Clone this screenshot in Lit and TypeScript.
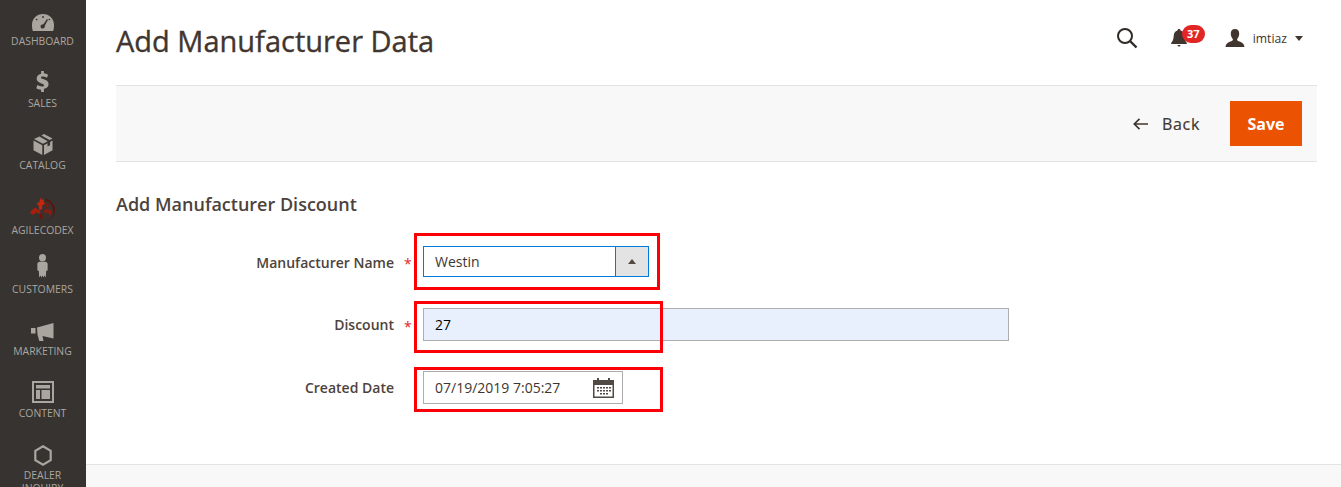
import { LitElement, html, css } from "lit";
import { customElement } from "lit/decorators.js";

const navItems = [
  { label: "DASHBOARD", lift: 1, icon: html`<svg width="22" height="17" viewBox="0 0 22 17"><path fill="#aaa69f" fill-rule="evenodd" d="M11 0C4.800 0 .3 4.600 0 10.500c-.1 2.500.3 4.700.8 6.500h20.400c.5-1.800.9-4 .8-6.500C21.700 4.600 17.200 0 11 0zM4.500 4.500l1.200 1.200-.9.900-1.200-1.200zM10.300 2h1.400v2h-1.400zM17.500 4.500l.9.900-1.200 1.200-.9-.9zM15 5l1 .7-3.200 6c.3 1.100-.2 2.400-1.400 2.800-1.200.4-2.500-.3-2.800-1.500-.3-1.200.3-2.300 1.500-2.600l1.300-.2z"/></svg>`, h: 62 },
  { label: "SALES", lift: 2, h: 62, icon: html`<svg width="13" height="21" viewBox="0 0 14 23" preserveAspectRatio="none"><path fill="#aaa69f" d="M5.500 0h3v2.600c1.700.2 3.200.7 4.500 1.500l-1.200 3.300c-1.500-.9-3.100-1.400-4.500-1.400-1.300 0-2 .5-2 1.200 0 .8.900 1.200 3 1.900 3.300 1 5.200 2.400 5.200 5.300 0 2.600-1.800 4.500-5 5V23h-3v-2.500c-2-.2-3.900-.8-5.200-1.700l1.200-3.400c1.500 1 3.400 1.600 5 1.600 1.400 0 2.200-.5 2.200-1.400 0-.8-.8-1.300-2.900-2C2.700 12.600.7 11.200.7 8.300c0-2.700 1.800-4.700 4.800-5.400z"/></svg>` },
  { label: "CATALOG", lift: 1, h: 65, icon: html`<svg width="20" height="21" viewBox="0 0 20 21"><path fill="#aaa69f" d="M11 0l8.500 4.600-2.800 1.500L8.400 1.400zM6.400 2.500l8.300 4.700L10 9.700 1 5zM.5 6.600l8.800 4.600V21L.5 16.200zM19.500 6.600v9.600L11 21v-9.800l3.500-1.900v3.300l2.600-1.300V8z"/></svg>` },
  { label: "AGILECODEX", lift: -1, h: 59, icon: html`<svg width="25" height="25" viewBox="0 0 25 25"><path fill="#5a1510" d="M15 1.500A11.500 11.500 0 0 1 25 12.500 11.500 11.500 0 0 1 8 23.300 10 10 0 0 0 23 12.500 10 10 0 0 0 15 3.200z"/><path fill="#c4260f" d="M11 0l1 3 2-1-.5 3 2 1.500-3 1.500-.5 4-2.500 1.500-1-5L6.500 6 9 5.500z"/><path fill="#a81e0e" d="M0 15l5-4.500 4.500 3 1.500 3.500-4.500-1.500L2 18z"/><path fill="#8a1c10" d="M13.500 15l2-3.500 5.500 1.500.5 3.500-2 2.500-1.500-3.500-2 .5z"/><path fill="#6b1710" d="M10.500 16.500l2 .5 .5 4-2 1.500-2.500-3z"/><circle cx="17" cy="8.500" r="2" fill="#7a1a10"/></svg>` },
  { label: "CUSTOMERS", lift: 2, h: 62, icon: html`<svg width="11" height="24" viewBox="0 0 12 25" preserveAspectRatio="none"><path fill="#aaa69f" d="M6 0a3.800 3.800 0 1 1 0 7.600A3.800 3.800 0 0 1 6 0zM3 8h6c1.600 0 2.600 1 2.600 2.500v6.500l-1.600.8-.4 6.700-1.500-2-1 2-1.100-2-1.100 2-1-2-1.500 2-.4-6.700L.4 17v-6.500C.4 9 1.400 8 3 8z"/></svg>` },
  { label: "MARKETING", lift: 1, h: 62, icon: html`<svg width="23" height="18" viewBox="0 0 23 18"><path fill="#aaa69f" d="M22.500 0v15.500L11.500 13l1 5H8.300L6.500 11.500 6 4.500zM0 5h4.500v5.500H0z"/></svg>` },
  { label: "CONTENT", lift: 1, h: 62, icon: html`<svg width="22" height="22" viewBox="0 0 22 22"><path fill="#aaa69f" fill-rule="evenodd" d="M0 0h22v22H0zM2 2v18h18V2zM4 4h14v3.500H4zM4 9h4v9H4zM9.500 9H18v9H9.500z"/></svg>` },
  { label: "DEALER INQUIRY", lift: 0, h: 62, icon: html`<svg width="18" height="21" viewBox="0 0 18 21"><path fill="none" stroke="#aaa69f" stroke-width="2.200" d="M9 1.300l7.700 4.500v9.400L9 19.700l-7.700-4.500V5.800z"/></svg>` },
];

@customElement("app-root")
export class AppRoot extends LitElement {
  static styles = css`
    :host {
      display: block;
      height: 487px;
      overflow: hidden;
      font-family: "Open Sans", sans-serif;
      color: #41362f;
      position: relative;
      background: #fff;
    }
    .shell { display: flex; height: 487px; }
    .nav {
      width: 86px;
      flex: none;
      background: #373330;
      overflow: hidden;
      padding: 11px 1px 0 0;
      box-sizing: border-box;
    }
    .nav-item {
      display: flex;
      flex-direction: column;
      align-items: center;
      color: #aaa69f;
      font-size: 10.4px;
      line-height: 13px;
      text-align: center;
    }
    .nav-icon { height: 21px; display: flex; align-items: flex-end; justify-content: center; }
    .nav-label { margin-top: 3px; width: 70px; }
    .main { flex: 1; min-width: 0; display: flex; flex-direction: column; }
    .page { padding: 0 24px 0 30px; height: 464px; box-sizing: border-box; }
    .head { display: flex; align-items: flex-start; height: 85px; }
    h1 {
      margin: 21px 0 0;
      font-size: 29px;
      font-weight: 400;
      line-height: 40px;
      color: #41362f;
      -webkit-text-stroke: 0.35px #41362f;
    }
    .tools { margin-left: auto; display: flex; align-items: center; margin-top: 26px; height: 24px; }
    .search { margin-right: 33px; display: flex; }
    .bell { position: relative; width: 16px; height: 18px; margin-right: 38px; display: flex; }
    .badge {
      position: absolute;
      left: 11px;
      top: -4px;
      width: 23px;
      height: 18px;
      border-radius: 9px;
      background: #e22626;
      color: #fff;
      font-size: 11px;
      font-weight: 700;
      line-height: 18px;
      text-align: center;
    }
    .user { display: flex; align-items: center; font-size: 12.2px; color: #41362f; margin-right: 14px; }
    .user svg:first-child { margin-right: 8px; }
    .caret { margin-left: 8px; }
    .toolbar {
      height: 77px;
      box-sizing: border-box;
      background: #f8f8f8;
      border-top: 1px solid #e3e3e3;
      border-bottom: 1px solid #e3e3e3;
      display: flex;
      align-items: center;
      justify-content: flex-end;
      padding: 0 15px 0 0;
    }
    .back { display: flex; align-items: center; font-size: 16px; color: #41362f; margin-right: 30px; letter-spacing: 0.7px; -webkit-text-stroke: 0.2px #41362f; }
    .back svg { margin-right: 14px; }
    .save {
      width: 72px;
      height: 45px;
      background: #eb5202;
      color: #fff;
      font-size: 16px;
      font-weight: 700;
      display: flex;
      align-items: center;
      justify-content: center;
    }
    h2 {
      margin: 30px 0 0;
      font-size: 18px;
      font-weight: 600;
      line-height: 24px;
      color: #4d433c;
    }
    .form { margin-top: 30px; display: flex; flex-direction: column; }
    .row { display: grid; grid-template-columns: 278px 29px auto; align-items: center; }
    .row + .row { margin-top: 31px; }
    .row.d { margin-top: 30px; }
    .lab { text-align: right; font-size: 14px; font-weight: 600; color: #4d433c; line-height: 20px; }
    .lab.low { padding-top: 2px; }
    .star { color: #e22626; font-size: 14px; padding-left: 10px; line-height: 20px; padding-top: 4px; }
    .select {
      width: 226px;
      height: 31px;
      box-sizing: border-box;
      border: 1px solid #007bdb;
      display: flex;
      font-size: 14px;
      line-height: 29px;
      color: #41362f;
      background: #fff;
    }
    .select .val { flex: 1; padding-left: 11px; }
    .select .btn {
      width: 32px;
      background: #e3e3e3;
      border-left: 1px solid #007bdb;
      display: flex;
      align-items: center;
      justify-content: center;
    }
    .input {
      box-sizing: border-box;
      height: 33px;
      border: 1px solid #adadad;
      font-size: 14px;
      line-height: 31px;
      padding-left: 11px;
    }
    .input.num { width: 586px; background: #e8f0fe; color: #000; }
    .input.date { width: 200px; background: #fff; color: #41362f; display: flex; align-items: center; justify-content: space-between; padding-right: 8px; }
    .input.date svg { display: block; }
    .mark { position: absolute; border: 3px solid #fb0007; box-sizing: border-box; pointer-events: none; }
    .m1 { left: 414px; top: 233px; width: 246px; height: 57px; }
    .m2 { left: 414px; top: 301px; width: 249px; height: 52px; }
    .m3 { left: 414px; top: 367px; width: 249px; height: 45px; }
    .foot { flex: 1; border-top: 1px solid #e3e3e3; background: #f8f8f8; }
  `;

  render() {
    return html`
      <div class="shell">
        <nav class="nav">
          ${navItems.map(
            (n) => html`<div class="nav-item" style="height:${n.h}px">
              <div class="nav-icon" style="transform:translateY(${-n.lift}px)">${n.icon}</div>
              <div class="nav-label">${n.label}</div>
            </div>`
          )}
        </nav>
        <div class="main">
          <div class="page">
            <div class="head">
              <h1>Add Manufacturer Data</h1>
              <div class="tools">
                <span class="search"><svg width="22" height="22" viewBox="0 0 22 22"><circle cx="9" cy="9" r="7" fill="none" stroke="#2f2a26" stroke-width="2"/><path d="M14 14l6.500 6.500" stroke="#2f2a26" stroke-width="2.400" fill="none"/></svg></span>
                <span class="bell"><svg width="16" height="18" viewBox="0 0 16 18"><path fill="#41362f" d="M8 0c1 0 1.500.6 1.600 1.500C12 2.200 13.200 4 13.300 7c.1 3 .8 5 2.500 6.800V15H.2v-1.200C1.900 12 2.600 10 2.700 7 2.800 4 4 2.200 6.400 1.500 6.500.6 7 0 8 0zM6.500 16h3a1.500 1.500 0 0 1-3 0z"/></svg><span class="badge">37</span></span>
                <span class="user">
                  <svg width="20" height="18" viewBox="0 0 20 18"><path fill="#41362f" d="M10 0c2.800 0 4.300 2 4.200 4.700-.1 2.300-.9 4.200-2 5.200-.3 1 .1 1.700 1.500 2.300 2.700 1 5.300 1.700 5.800 5.800H.5c.5-4.100 3.100-4.800 5.800-5.800 1.400-.6 1.800-1.300 1.500-2.300-1.100-1-1.900-2.900-2-5.200C5.700 2 7.200 0 10 0z"/></svg>
                  imtiaz
                  <svg class="caret" width="8" height="5" viewBox="0 0 8 5"><path fill="#41362f" d="M0 0h8L4 5z"/></svg>
                </span>
              </div>
            </div>
            <div class="toolbar">
              <span class="back"><svg width="15" height="12" viewBox="0 0 15 12"><path fill="none" stroke="#41362f" stroke-width="1.700" d="M6.500 .8L1.300 6l5.200 5.200M1.500 6H15"/></svg>Back</span>
              <span class="save">Save</span>
            </div>
            <h2>Add Manufacturer Discount</h2>
            <div class="form">
              <div class="row">
                <div class="lab low">Manufacturer Name</div><div class="star">*</div>
                <div class="select"><span class="val">Westin</span><span class="btn"><svg width="8" height="5" viewBox="0 0 8 5"><path fill="#514943" d="M0 5h8L4 0z"/></svg></span></div>
              </div>
              <div class="row">
                <div class="lab">Discount</div><div class="star">*</div>
                <div class="input num">27</div>
              </div>
              <div class="row d">
                <div class="lab">Created Date</div><div></div>
                <div class="input date">07/19/2019 7:05:27
                  <svg width="21" height="20" viewBox="0 0 21 20"><path fill="#514943" fill-rule="evenodd" d="M0 2h4V0h2v2h9V0h2v2h4v18H0zM1.500 7v11.500h18V7zM4 9h2v1.500H4zm3 0h2v1.500H7zm3 0h2v1.500h-2zm3 0h2v1.500h-2zm3 0h2v1.500h-2zM4 12h2v1.500H4zm3 0h2v1.500H7zm3 0h2v1.500h-2zm3 0h2v1.500h-2zm3 0h2v1.500h-2zM7 15h2v1.500H7zm3 0h2v1.500h-2zm3 0h2v1.500h-2z"/></svg>
                </div>
              </div>
            </div>
          </div>
          <div class="foot"></div>
        </div>
      </div>
      <div class="mark m1"></div>
      <div class="mark m2"></div>
      <div class="mark m3"></div>
    `;
  }
}
